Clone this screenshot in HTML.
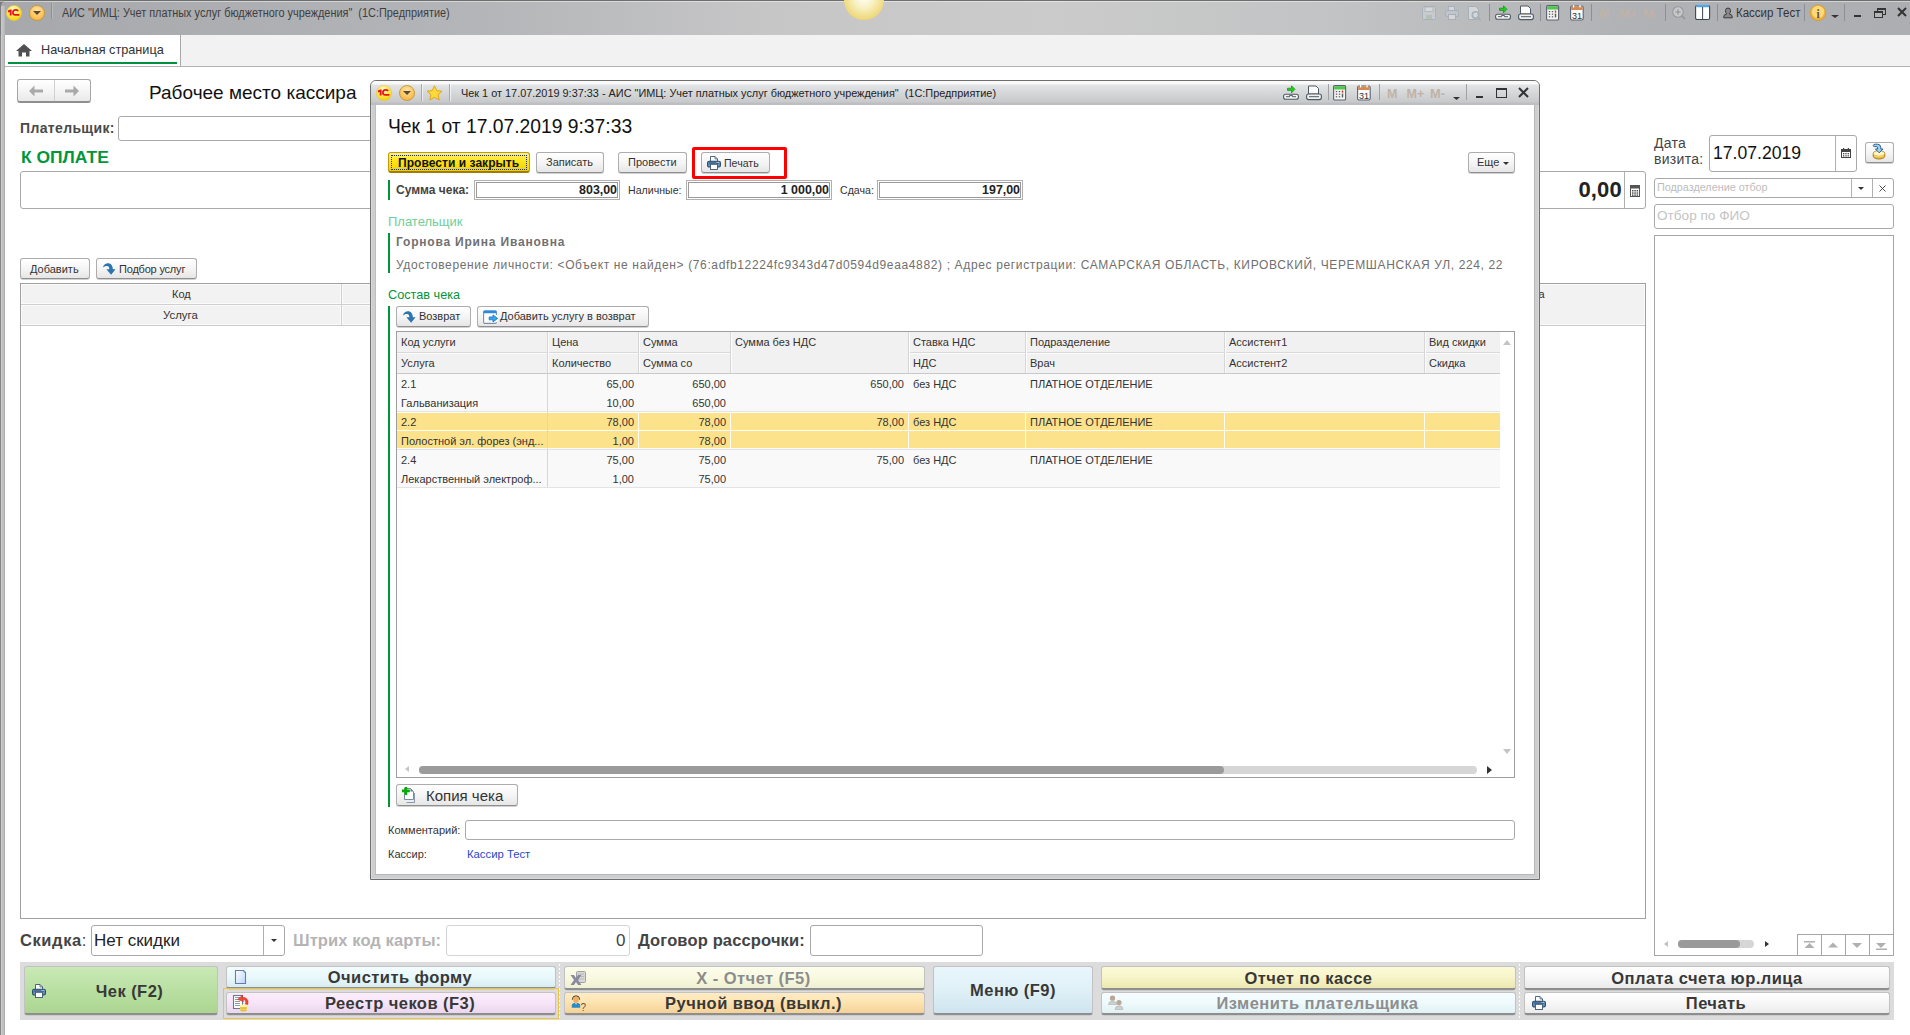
<!DOCTYPE html>
<html><head><meta charset="utf-8">
<style>
*{box-sizing:border-box}
html,body{margin:0;padding:0}
body{width:1910px;height:1035px;position:relative;overflow:hidden;background:#fff;font-family:"Liberation Sans",sans-serif;color:#333}
.a{position:absolute}
.t{position:absolute;white-space:nowrap;line-height:1}
.btn{position:absolute;border:1px solid #adadad;border-bottom-color:#8f8f8f;border-radius:3px;background:linear-gradient(#ffffff,#f4f4f4 55%,#e6e6e6);box-shadow:0 1px 0 rgba(0,0,0,0.18)}
.inp{position:absolute;border:1px solid #a9a9a9;border-radius:3px;background:#fff}
.sep{position:absolute;width:1px;background:#9a9a9a;box-shadow:1px 0 0 rgba(255,255,255,.6)}
.circ{position:absolute;border-radius:50%}
.hdr{position:absolute;background:#f0f0f0;border-right:1px solid #d6d6d6;border-bottom:1px solid #d6d6d6}
</style></head>
<body>

<!-- ============ MAIN TITLE BAR ============ -->
<div class="a" style="left:0;top:0;width:8px;height:8px;background:#7a7a7a"></div>
<div class="a" style="left:0;top:0;width:1910px;height:35px;background:linear-gradient(90deg,#a7a8ab 0%,#b4b5b8 25%,#c6c6c7 40%,#cbcbcb 55%,#c2c3c4 70%,#b1b2b5 85%,#adaeb1 100%);border-top:1px solid #6e6e6e;border-left:1px solid #7d7d7d;border-top-left-radius:6px"></div>
<div class="a" style="left:0;top:1px;width:1910px;height:1px;background:rgba(255,255,255,.45)"></div>

<div class="a" style="left:1px;top:6px;width:4px;height:29px;background:linear-gradient(90deg,#c9c9ca 0,#bcbdbf 3px,#b0b1b4 4px)"></div>
<!-- glow -->
<div class="circ" style="left:844px;top:-20px;width:40px;height:40px;background:radial-gradient(circle at 50% 45%,#fffef6 0%,#f7f0c0 35%,#efd97c 70%,#e7c558 100%)"></div>


<!-- logo + dropdown -->
<svg class="a" style="left:6px;top:5px" width="16" height="16" viewBox="0 0 16 16"><defs><radialGradient id="lg1" cx="0.45" cy="0.3" r="0.7"><stop offset="0" stop-color="#fffbd8"/><stop offset="0.55" stop-color="#ffea50"/><stop offset="1" stop-color="#f5d000"/></radialGradient></defs>
<circle cx="8" cy="8" r="7.6" fill="url(#lg1)" stroke="#e6c84a" stroke-width="0.6"/>
<path d="M1.9 5.6 L4.2 4.6 H5.6 V10.6 H3.7 V6.9 L1.9 7.5 Z" fill="#e8141c"/>
<path d="M12.2 5.9 Q11.2 4.9 9.6 4.9 Q6.9 4.9 6.9 7.7 Q6.9 9.9 9.2 9.9 H13.4" fill="none" stroke="#e8141c" stroke-width="1.7"/></svg>
<div class="circ" style="left:29px;top:5px;width:16px;height:16px;background:radial-gradient(circle at 50% 30%,#ffe3a6 0%,#ffc35a 60%,#f2a93a 100%);border:1px solid #c89c3c"></div>
<div class="a" style="left:33px;top:11px;width:0;height:0;border-left:4px solid transparent;border-right:4px solid transparent;border-top:4px solid #5a4a30"></div>
<div class="a" style="left:51px;top:3px;width:1px;height:16px;background:#8e8f92"></div><div class="a" style="left:52px;top:3px;width:1px;height:16px;background:rgba(255,255,255,.2)"></div>
<div class="t" style="left:62px;top:7px;font-size:12px;color:#3e3e3e;transform:scaleX(0.908);transform-origin:0 0">АИС "ИМЦ: Учет платных услуг бюджетного учреждения"&nbsp; (1С:Предприятие)</div>


<!-- right toolbar icons in main title -->
<svg class="a" style="left:1418px;top:4px" width="500" height="18" viewBox="0 0 500 18">
 <defs>
  <g id="icLoad">
   <path d="M4.5 3.2 H8.5 V0.8 L12 4.3 L8.5 7.8 V5.4 H4.5 Z" fill="#22d022" stroke="#0e8a0e" stroke-width="0.7"/>
   <rect x="0.6" y="9.2" width="14.8" height="5" rx="2" fill="#f2f2f2" stroke="#505a64" stroke-width="1.1"/>
   <path d="M3 11.7 H6.5 V10.6 H9.5 V11.7 H13" fill="none" stroke="#505a64" stroke-width="1"/>
  </g>
  <g id="icScan">
   <path d="M2.5 1 H10 L12.5 3.5 V9 H2.5 Z" fill="#fafafa" stroke="#505a64" stroke-width="1"/>
   <rect x="0.6" y="9" width="14.8" height="5.6" rx="2" fill="#f0f0f0" stroke="#505a64" stroke-width="1.1"/>
   <path d="M3 11.7 H13" fill="none" stroke="#505a64" stroke-width="1"/>
  </g>
  <g id="icCalc">
   <rect x="0.6" y="0.6" width="12" height="14.4" rx="1" fill="#f4f4f4" stroke="#5a6470" stroke-width="1.1"/>
   <rect x="1.2" y="1.2" width="10.8" height="3.3" fill="#4cc84c"/>
   <g fill="#5a5a5a"><rect x="2.8" y="6" width="1.4" height="1.2"/><rect x="5.8" y="6" width="1.4" height="1.2"/><rect x="2.8" y="8.6" width="1.4" height="1.2"/><rect x="5.8" y="8.6" width="1.4" height="1.2"/><rect x="2.8" y="11.2" width="1.4" height="1.2"/><rect x="5.8" y="11.2" width="1.4" height="1.2"/><rect x="8.8" y="8.6" width="1.4" height="3.8"/></g>
   <rect x="8.8" y="5.6" width="1.4" height="2" fill="#e02020"/>
  </g>
  <g id="icCal">
   <rect x="0.6" y="1" width="12.6" height="14" rx="1.5" fill="#fbfbfb" stroke="#5a6470" stroke-width="1.1"/>
   <rect x="1.2" y="1.5" width="11.4" height="3.5" fill="#d48a50"/>
   <rect x="3" y="0" width="1.2" height="2.5" fill="#fff"/><rect x="9.4" y="0" width="1.2" height="2.5" fill="#fff"/>
   <text x="6.9" y="13.6" font-size="9" text-anchor="middle" fill="#333" font-family="Liberation Sans">31</text>
  </g>
  <g id="icPrn">
   <path d="M3.5 0.5 H8 L10.5 3 V6 H3.5 Z" fill="#fff" stroke="#3a5878" stroke-width="0.9"/>
   <path d="M8 0.5 V3 H10.5" fill="none" stroke="#3a5878" stroke-width="0.7"/>
   <rect x="0.6" y="5.2" width="12.8" height="5.8" rx="1.6" fill="#6f93b8" stroke="#23476d" stroke-width="1.1"/>
   <rect x="2" y="6.6" width="10" height="0.9" fill="#23476d"/>
   <rect x="9.6" y="5.9" width="1" height="0.8" fill="#fff"/><rect x="11.2" y="5.9" width="1" height="0.8" fill="#fff"/>
   <rect x="3.5" y="8.3" width="7" height="5.2" fill="#fff" stroke="#3a5878" stroke-width="0.9"/>
  </g>
 </defs>
 <!-- save (disabled) -->
 <g transform="translate(4,2)" opacity="0.4">
  <rect x="0.5" y="0.5" width="13" height="13" rx="1" fill="#d8e0e8" stroke="#8aa0b4"/>
  <rect x="3" y="1" width="8" height="4.5" fill="#fff" stroke="#8aa0b4" stroke-width="0.8"/>
  <rect x="4" y="9" width="6" height="4" fill="#a8c8a8"/>
 </g>
 <!-- print disabled -->
 <g transform="translate(27,2)" opacity="0.4">
  <rect x="3.5" y="0.5" width="6" height="4" fill="#fff" stroke="#8aa0b4"/>
  <rect x="0.5" y="4.5" width="13" height="6" rx="1.5" fill="#c8d4e0" stroke="#8aa0b4"/>
  <rect x="3.5" y="8.5" width="7" height="5" fill="#fff" stroke="#8aa0b4"/>
 </g>
 <!-- preview disabled -->
 <g transform="translate(50,2)" opacity="0.4">
  <path d="M0.5 0.5 H7.5 L10.5 3.5 V13.5 H0.5 Z" fill="#fff" stroke="#8aa0b4"/>
  <circle cx="7.5" cy="9" r="3.2" fill="none" stroke="#8aa0b4" stroke-width="1.6"/>
  <line x1="9.8" y1="11.3" x2="12.8" y2="14.3" stroke="#8aa0b4" stroke-width="1.8"/>
 </g>
 <rect x="71" y="0" width="1" height="17" fill="#8e8f92"/>
 <use href="#icLoad" x="77" y="1"/>
 <use href="#icScan" x="100" y="1"/>
 <rect x="122" y="0" width="1" height="17" fill="#8e8f92"/>
 <use href="#icCalc" x="128" y="1"/>
 <use href="#icCal" x="152" y="1"/>
 <rect x="173" y="0" width="1" height="17" fill="#8e8f92"/>
 <g font-family="Liberation Sans" font-size="12.5" font-weight="bold" fill="#bfb3a8">
  <text x="181" y="13.8">M</text><text x="201.5" y="13.8">M+</text><text x="225" y="13.8" textLength="15" lengthAdjust="spacingAndGlyphs">M-</text>
 </g>
 <rect x="247" y="0" width="1" height="17" fill="#8e8f92"/>
 <g transform="translate(254,2)" opacity="0.45">
  <circle cx="6" cy="6" r="5.3" fill="#e8e8e8" stroke="#7a7a7a" stroke-width="1.1"/>
  <path d="M3.3 6 H8.7 M6 3.3 V8.7" stroke="#6a6a6a" stroke-width="1.1"/>
  <line x1="9.8" y1="9.8" x2="13" y2="13" stroke="#7a7a7a" stroke-width="1.8"/>
 </g>
 <g transform="translate(277,0.5)">
  <rect x="0.6" y="1" width="14" height="14" rx="1.5" fill="#fff" stroke="#3a4654" stroke-width="1.1"/>
  <rect x="1.1" y="0.6" width="13" height="2.2" rx="1" fill="#4aa8f0"/>
  <rect x="7.1" y="2.5" width="1" height="12" fill="#3a4654"/>
 </g>
 <rect x="299" y="0" width="1" height="17" fill="#8e8f92"/>
 <g transform="translate(305.5,3.5)">
  <path d="M4.5 0.5 Q7 0.5 7 3.3 Q7 5.4 5.7 6.3 Q8.8 6.9 8.8 9.6 V10.3 H0.2 V9.6 Q0.2 6.9 3.3 6.3 Q2 5.4 2 3.3 Q2 0.5 4.5 0.5 Z" fill="#8a8a8a" stroke="#3a3a3a" stroke-width="1"/>
 </g>
 <rect x="386" y="0" width="1" height="17" fill="#8e8f92"/>
 <circle cx="400" cy="8.8" r="7.8" fill="#f0b040" stroke="#d09a30" stroke-width="0.8"/>
 <circle cx="400" cy="8" r="6.2" fill="#ffd878"/>
 <text x="400" y="13.6" font-size="11.5" font-weight="bold" text-anchor="middle" fill="#5a5046" font-family="Liberation Serif">i</text>
 <path d="M413 11 h8 l-4 3 z" fill="#333"/>
 <rect x="426" y="0" width="1" height="17" fill="#8e8f92"/>
 <rect x="436" y="11" width="7" height="2" fill="#333"/>
 <rect x="459.5" y="4.5" width="8" height="6" fill="none" stroke="#333" stroke-width="1"/>
 <rect x="459" y="4" width="9" height="2" fill="#333"/>
 <rect x="456.5" y="7.5" width="8" height="6" fill="#b5b6b9" stroke="#333" stroke-width="1"/>
 <rect x="456" y="7" width="9" height="2" fill="#333"/>
 <path d="M480 4 L488 12 M488 4 L480 12" stroke="#333" stroke-width="2"/>
</svg>
<div class="t" style="left:1736px;top:7px;font-size:12.5px;color:#333;transform:scaleX(0.92);transform-origin:0 0">Кассир Тест</div>

<!-- ============ LEFT WINDOW FRAME ============ -->
<div class="a" style="left:0;top:35px;width:5px;height:1000px;background:linear-gradient(90deg,#858585 0,#858585 1px,#cdcdcd 1px,#cdcdcd 2px,#bfbfbf 2px,#bfbfbf 4px,#acacac 4px)"></div>

<!-- ============ TAB BAR ============ -->
<div class="a" style="left:5px;top:35px;width:1905px;height:32px;background:#f2f2f2;border-bottom:1px solid #b3b3b3"></div>
<div class="a" style="left:5px;top:35px;width:176px;height:31px;background:#fff;border-right:1px solid #a8a8a8"></div>
<div class="a" style="left:8px;top:62px;width:169px;height:2px;background:#00923f"></div>
<svg class="a" style="left:16px;top:44px" width="16" height="13" viewBox="0 0 16 13"><path d="M8 0 L16 7 H13.5 V12.5 H10 V8.5 H6 V12.5 H2.5 V7 H0 Z" fill="#505050"/></svg>
<div class="t" style="left:41px;top:44px;font-size:12.7px;color:#333">Начальная страница</div>


<!-- ============ MAIN FORM ============ -->
<!-- nav -->
<div class="btn" style="left:17px;top:79px;width:74px;height:24px;border-radius:3px;box-shadow:none;border-color:#a6a6a6;border-bottom-color:#8f8f8f;border-bottom-width:2px;background:linear-gradient(#fff,#f3f3f3 60%,#e9e9e9)"></div>
<div class="a" style="left:54px;top:80px;width:1px;height:21px;background:#d0d0d0"></div>
<svg class="a" style="left:29px;top:85px" width="60" height="12" viewBox="0 0 60 12">
 <path d="M0 6 L5.5 0.5 V4.5 H14 V7.5 H5.5 V11.5 Z" fill="#a9a9a9"/>
 <path d="M50 6 L44.5 0.5 V4.5 H36 V7.5 H44.5 V11.5 Z" fill="#a9a9a9"/>
</svg>
<div class="t" style="left:149px;top:83px;font-size:19px;color:#111">Рабочее место кассира</div>

<div class="t" style="left:20px;top:121px;font-size:14px;font-weight:bold;color:#4a4a4a;letter-spacing:0.35px">Плательщик:</div>
<div class="inp" style="left:118px;top:116px;width:1300px;height:25px"></div>

<div class="t" style="left:21px;top:150px;font-size:16px;font-weight:bold;color:#00963c;transform:scaleX(1.09);transform-origin:0 0">К ОПЛАТЕ</div>
<div class="inp" style="left:20px;top:171px;width:1626px;height:38px"></div>
<div class="a" style="left:1624px;top:172px;width:1px;height:36px;background:#b0b0b0"></div>
<div class="t" style="left:1500px;top:179px;width:122px;text-align:right;font-size:22px;font-weight:bold;color:#222;letter-spacing:0.2px">0,00</div>
<svg class="a" style="left:1630px;top:185px" width="10" height="12" viewBox="0 0 10 12">
 <rect x="0.5" y="0.5" width="9" height="11" fill="#fff" stroke="#555"/>
 <rect x="1" y="1" width="8" height="2.5" fill="#555"/>
 <g fill="#555"><rect x="2" y="5" width="1.5" height="1.5"/><rect x="4.3" y="5" width="1.5" height="1.5"/><rect x="6.6" y="5" width="1.5" height="1.5"/><rect x="2" y="7.3" width="1.5" height="1.5"/><rect x="4.3" y="7.3" width="1.5" height="1.5"/><rect x="6.6" y="7.3" width="1.5" height="1.5"/><rect x="2" y="9.4" width="1.5" height="1.5"/><rect x="4.3" y="9.4" width="1.5" height="1.5"/><rect x="6.6" y="9.4" width="1.5" height="1.5"/></g>
</svg>

<div class="btn" style="left:20px;top:258px;width:70px;height:21px"></div>
<div class="t" style="left:30px;top:264px;font-size:11px;color:#333">Добавить</div>
<div class="btn" style="left:96px;top:258px;width:101px;height:21px"></div>
<svg class="a" style="left:102px;top:262px" width="14" height="14" viewBox="0 0 14 14"><path d="M0.8 5.6 C2 2 5 0.8 7.5 1.6 C9.8 2.4 10.8 4.6 10.8 7.3 L13.6 7.3 L9.1 12.8 L4.4 7.3 L7.4 7.3 C7.4 5.4 6.6 4.3 5.2 4.1 C3.6 3.9 2.2 4.6 0.8 5.6 Z" fill="#2a74b0"/></svg>
<div class="t" style="left:119px;top:264px;font-size:11px;color:#333;letter-spacing:-0.2px">Подбор услуг</div>

<!-- main table -->
<div class="a" style="left:20px;top:283px;width:1626px;height:636px;border:1px solid #a0a0a0;background:#fff"></div>
<div class="a" style="left:21px;top:284px;width:1624px;height:41px;background:#f2f2f2;border:1px solid #fbfbfb"></div>
<div class="a" style="left:21px;top:303px;width:1349px;height:3px;background:#fbfbfb"></div>
<div class="a" style="left:340px;top:284px;width:3px;height:41px;background:#fbfbfb"></div>
<div class="a" style="left:21px;top:304px;width:1349px;height:1px;background:#cfcfcf"></div>
<div class="a" style="left:341px;top:284px;width:1px;height:41px;background:#cfcfcf"></div>
<div class="a" style="left:21px;top:325px;width:1624px;height:1px;background:#c9c9c9"></div>
<div class="t" style="left:172px;top:289px;font-size:11px;color:#333">Код</div>
<div class="t" style="left:163px;top:310px;font-size:11.4px;color:#333">Услуга</div>
<div class="t" style="left:1510px;top:289px;font-size:11px;color:#333">Сумма</div>


<!-- ============ RIGHT PANEL ============ -->
<div class="t" style="left:1654px;top:135px;font-size:14px;color:#444;line-height:16px;letter-spacing:0.3px">Дата<br>визита:</div>
<div class="inp" style="left:1709px;top:135px;width:148px;height:37px"></div>
<div class="a" style="left:1835px;top:136px;width:1px;height:35px;background:#b0b0b0"></div>
<div class="t" style="left:1713px;top:145px;font-size:17.6px;color:#111">17.07.2019</div>
<svg class="a" style="left:1841px;top:148px" width="10" height="10" viewBox="0 0 10 10">
 <rect x="0.5" y="1.5" width="9" height="8" fill="#fff" stroke="#444"/>
 <rect x="0.5" y="1.5" width="9" height="2.5" fill="#444"/>
 <rect x="2" y="0" width="1.2" height="2" fill="#444"/><rect x="6.8" y="0" width="1.2" height="2" fill="#444"/>
 <g fill="#444"><rect x="2" y="5" width="1.3" height="1.3"/><rect x="4.3" y="5" width="1.3" height="1.3"/><rect x="6.6" y="5" width="1.3" height="1.3"/><rect x="2" y="7.2" width="1.3" height="1.3"/><rect x="4.3" y="7.2" width="1.3" height="1.3"/><rect x="6.6" y="7.2" width="1.3" height="1.3"/></g>
</svg>
<div class="btn" style="left:1865px;top:142px;width:29px;height:21px"></div>
<svg class="a" style="left:1872px;top:143px" width="14" height="17" viewBox="0 0 14 17">
 <path d="M1.2 13.2 V10.4 A5.8 2.6 0 0 1 12.8 10.4 V13.2 A5.8 2.8 0 0 1 1.2 13.2 Z" fill="#e6b83a" stroke="#a8761c" stroke-width="0.9"/>
 <ellipse cx="7" cy="10.4" rx="5.4" ry="2.4" fill="#fff6c0"/>
 <path d="M2 13 Q7 14.8 12 13" fill="none" stroke="#f8e088" stroke-width="0.8"/>
 <path d="M1.2 2.6 Q1.6 1.2 3.2 1.2 H5.6 Q8.6 1.2 8.8 4.6 V6 H11 L7.2 9.8 L3.4 6 H5.6 V4.8 Q5.6 3.6 4.2 3.6 H2.6 Q1.2 3.6 1.2 2.6 Z" fill="#9cd2f6" stroke="#23507e" stroke-width="0.9"/>
</svg>
<div class="inp" style="left:1654px;top:178px;width:240px;height:20px"></div>
<div class="a" style="left:1851px;top:179px;width:1px;height:18px;background:#b0b0b0"></div>
<div class="a" style="left:1872px;top:179px;width:1px;height:18px;background:#b0b0b0"></div>
<div class="a" style="left:1858px;top:187px;width:0;height:0;border-left:3.5px solid transparent;border-right:3.5px solid transparent;border-top:3.5px solid #333"></div>
<svg class="a" style="left:1879px;top:185px" width="7" height="7" viewBox="0 0 7 7"><path d="M0.5 0.5 L6.5 6.5 M6.5 0.5 L0.5 6.5" stroke="#444" stroke-width="0.95"/></svg>
<div class="t" style="left:1657px;top:182px;font-size:10.8px;color:#bdbdbd">Подразделение отбор</div>
<div class="inp" style="left:1654px;top:204px;width:240px;height:25px"></div>
<div class="t" style="left:1657px;top:209px;font-size:13.6px;color:#c4c4c4">Отбор по ФИО</div>
<div class="a" style="left:1654px;top:235px;width:240px;height:721px;border:1px solid #a6a6a6;background:#fff"></div>
<!-- list scroll bottom -->
<div class="a" style="left:1664px;top:941px;width:0;height:0;border-top:3px solid transparent;border-bottom:3px solid transparent;border-right:4px solid #c0c0c0"></div>
<div class="a" style="left:1678px;top:940px;width:76px;height:8px;border-radius:4px;background:#d6d6d6"></div>
<div class="a" style="left:1678px;top:940px;width:62px;height:8px;border-radius:4px;background:#9a9a9a"></div>
<div class="a" style="left:1765px;top:941px;width:0;height:0;border-top:3.5px solid transparent;border-bottom:3.5px solid transparent;border-left:4.5px solid #333"></div>
<div class="a" style="left:1797px;top:934px;width:97px;height:22px;border:1px solid #a6a6a6;border-right:none;border-bottom:none"></div>
<div class="a" style="left:1821px;top:934px;width:1px;height:21px;background:#a6a6a6"></div>
<div class="a" style="left:1845px;top:934px;width:1px;height:21px;background:#a6a6a6"></div>
<div class="a" style="left:1869px;top:934px;width:1px;height:21px;background:#a6a6a6"></div>
<svg class="a" style="left:1797px;top:934px" width="97" height="22" viewBox="0 0 97 22">
 <rect x="7" y="7" width="11" height="1.5" fill="#b0b0b0"/><path d="M7.5 14 L12.5 9 L17.5 14 Z" fill="#b0b0b0"/>
 <path d="M31 13.5 L36 8.5 L41 13.5 Z" fill="#b0b0b0"/>
 <path d="M55 9 L60 14 L65 9 Z" fill="#b0b0b0"/>
 <path d="M79 9 L84 14 L89 9 Z" fill="#b0b0b0"/><rect x="79" y="14.5" width="11" height="1.5" fill="#b0b0b0"/>
</svg>

<!-- ============ BOTTOM ROW ============ -->
<div class="t" style="left:20px;top:932px;font-size:16.5px;font-weight:bold;color:#444;letter-spacing:0.6px">Скидка<span style="font-weight:normal">:</span></div>
<div class="inp" style="left:91px;top:925px;width:194px;height:31px"></div>
<div class="a" style="left:263px;top:926px;width:1px;height:29px;background:#b0b0b0"></div>
<div class="a" style="left:271px;top:939px;width:0;height:0;border-left:3px solid transparent;border-right:3px solid transparent;border-top:3px solid #333"></div>
<div class="t" style="left:94px;top:932px;font-size:17px;color:#222">Нет скидки</div>
<div class="t" style="left:293px;top:932px;font-size:16.5px;font-weight:bold;color:#b4b4b4;letter-spacing:0.1px">Штрих код карты:</div>
<div class="inp" style="left:446px;top:925px;width:184px;height:31px;border-color:#d4d4d4"></div>
<div class="t" style="left:616px;top:932px;font-size:17px;color:#444">0</div>
<div class="t" style="left:638px;top:932px;font-size:16.5px;font-weight:bold;color:#444;letter-spacing:0.15px">Договор рассрочки:</div>
<div class="inp" style="left:810px;top:925px;width:173px;height:31px"></div>


<!-- ============ BUTTON PANEL ============ -->
<style>
.bb{position:absolute;border-radius:3px;border:1px solid #c2c2c2;border-bottom:2px solid #8e8e8e;box-shadow:0 0.5px 0 rgba(0,0,0,.15)}
.bt{position:absolute;white-space:nowrap;line-height:1;font-size:16.5px;font-weight:bold;color:#383838;letter-spacing:0.45px;text-align:center}
</style>
<div class="a" style="left:20px;top:962px;width:1874px;height:58px;background:#dcdcdc"></div>
<div class="a" style="left:559px;top:964px;width:1px;height:54px;background:repeating-linear-gradient(#fff 0,#fff 2px,transparent 2px,transparent 4px)"></div>
<div class="a" style="left:1519px;top:964px;width:1px;height:54px;background:repeating-linear-gradient(#fff 0,#fff 2px,transparent 2px,transparent 4px)"></div>

<div class="bb" style="left:24px;top:966px;width:194px;height:49px;background:linear-gradient(#c9e9b6,#b9e0a2 50%,#acd592)"></div>
<svg class="a" style="left:32px;top:984px" width="14" height="14" viewBox="0 0 14 14"><use href="#icPrn"/></svg>
<div class="bt" style="left:24px;top:983px;width:211px">Чек (F2)</div>

<div class="bb" style="left:226px;top:966px;width:330px;height:23px;background:linear-gradient(#f2fdff,#e9f8fb 50%,#d8edf1)"></div>
<svg class="a" style="left:234px;top:969px" width="14" height="16" viewBox="0 0 14 16">
 <defs><linearGradient id="docg" x1="0" y1="0" x2="1" y2="1"><stop offset="0" stop-color="#ffffff"/><stop offset="1" stop-color="#bcd6f8"/></linearGradient></defs>
 <path d="M1.5 1.5 H9.5 L11.5 3.5 V14.5 H1.5 Z" fill="url(#docg)" stroke="#6a78b8" stroke-width="1.1"/>
 <path d="M9.5 1.5 L11.5 3.5 H9.5 Z" fill="#5aa0f0"/>
</svg>
<div class="bt" style="left:226px;top:969px;width:348px">Очистить форму</div>

<div class="a" style="left:223px;top:988px;width:336px;height:31px;border:1px solid #f2c23c"></div>
<div class="bb" style="left:226px;top:992px;width:330px;height:23px;background:linear-gradient(#fbeefc,#f6e4f8 50%,#ead7ed)"></div>
<svg class="a" style="left:232px;top:994px" width="18" height="18" viewBox="0 0 18 18">
 <rect x="1.5" y="1.5" width="9" height="13" fill="#fff" stroke="#6a7a90" stroke-width="1.1"/>
 <g stroke="#8a9ab0" stroke-width="1"><line x1="3" y1="3.5" x2="8" y2="3.5"/><line x1="3" y1="5.5" x2="8" y2="5.5"/><line x1="3" y1="7.5" x2="8" y2="7.5"/><line x1="3" y1="9.5" x2="8" y2="9.5"/><line x1="3" y1="11.5" x2="8" y2="11.5"/></g>
 <ellipse cx="11.5" cy="15.8" rx="3.5" ry="1.6" fill="#e2c030"/>
 <rect x="8" y="11.8" width="7" height="4" fill="#f2d860"/>
 <ellipse cx="11.5" cy="11.8" rx="3.5" ry="1.6" fill="#fff4a8"/>
 <line x1="8.5" y1="14" x2="14.5" y2="14" stroke="#c8a020" stroke-width="0.8"/>
 <path d="M15.8 10.5 Q17 6.5 14.2 4.2 Q12.2 2.8 10.2 3.8 L10.6 1.2 L5.6 5.4 L11.4 7.6 L10.8 5.9 Q12.6 5.3 13.5 6.9 Q14.1 8.3 13.4 10 Z" fill="#f04a32" stroke="#c82a18" stroke-width="0.5"/>
</svg>
<div class="bt" style="left:226px;top:995px;width:348px">Реестр чеков (F3)</div>

<div class="bb" style="left:564px;top:966px;width:361px;height:24px;background:linear-gradient(#fdfdec,#f9f9e1 50%,#efefd2)"></div>
<svg class="a" style="left:570px;top:971px" width="17" height="15" viewBox="0 0 17 15">
 <rect x="6.5" y="0.5" width="9" height="11" rx="1" fill="#d8d8d8" stroke="#a0a0a0"/>
 <g stroke="#b8b8b8"><line x1="8" y1="3" x2="14" y2="3"/><line x1="8" y1="5.5" x2="14" y2="5.5"/><line x1="8" y1="8" x2="14" y2="8"/></g>
 <path d="M0.5 4 L4 4 L6 7 L8 4 L11.5 4 L8 9 L11.5 14 L8 14 L6 11 L4 14 L0.5 14 L4 9 Z" fill="#8a8aa0"/>
</svg>
<div class="bt" style="left:564px;top:970px;width:379px;color:#8c8c8c">X - Отчет (F5)</div>

<div class="bb" style="left:564px;top:992px;width:361px;height:23px;background:linear-gradient(#ffecc6,#fde2ae 50%,#f4d298)"></div>
<svg class="a" style="left:571px;top:995px" width="18" height="17" viewBox="0 0 18 17">
 <path d="M1.4 4.6 Q1.4 0.8 5 0.8 Q8.6 0.8 8.6 4.6" fill="none" stroke="#2a2a2a" stroke-width="1"/>
 <ellipse cx="5" cy="4.6" rx="2.9" ry="3.2" fill="#f0b060"/>
 <path d="M0.8 12.8 V10.4 Q0.8 7.8 5 7.8 Q9.2 7.8 9.2 10.4 V12.8 Z" fill="#2a8ac8"/>
 <path d="M4.3 7.9 L5 10 L5.7 7.9 Z" fill="#fff"/>
 <text x="9.6" y="15.6" font-size="10" font-family="Liberation Sans" fill="#7a4a2a">?</text>
</svg>
<div class="bt" style="left:564px;top:995px;width:379px">Ручной ввод (выкл.)</div>

<div class="bb" style="left:933px;top:966px;width:160px;height:49px;background:linear-gradient(#e9f7fc,#dff0f7 50%,#cfe4ee)"></div>
<div class="bt" style="left:933px;top:982px;width:160px">Меню (F9)</div>

<div class="bb" style="left:1101px;top:966px;width:415px;height:24px;background:linear-gradient(#fbfbd8,#f6f4c8 50%,#ece8b2)"></div>
<div class="bt" style="left:1101px;top:970px;width:415px">Отчет по кассе</div>

<div class="bb" style="left:1101px;top:992px;width:415px;height:23px;background:linear-gradient(#f6fdff,#eefafc 50%,#e1f1f3)"></div>
<svg class="a" style="left:1108px;top:995px" width="18" height="16" viewBox="0 0 18 16">
 <circle cx="4.5" cy="3.2" r="2.6" fill="#b8a898"/><path d="M0.5 9.5 Q0.5 6.3 4.5 6.3 Q8.5 6.3 8.5 9.5 Z" fill="#d0d0d0" stroke="#b0b0b0" stroke-width="0.6"/>
 <circle cx="11" cy="7.6" r="2.6" fill="#b8a898"/><path d="M7 14.5 Q7 10.8 11 10.8 Q15 10.8 15 14.5 Z" fill="#d0d0d0" stroke="#b0b0b0" stroke-width="0.6"/>
</svg>
<div class="bt" style="left:1101px;top:995px;width:433px;color:#8e8e8e">Изменить плательщика</div>

<div class="bb" style="left:1524px;top:966px;width:366px;height:24px;background:linear-gradient(#ffffff,#f7f7f7 50%,#ebebeb)"></div>
<div class="bt" style="left:1524px;top:970px;width:366px">Оплата счета юр.лица</div>

<div class="bb" style="left:1524px;top:992px;width:366px;height:23px;background:linear-gradient(#ffffff,#f7f7f7 50%,#ebebeb)"></div>
<svg class="a" style="left:1532px;top:996px" width="14" height="14" viewBox="0 0 14 14"><use href="#icPrn"/></svg>
<div class="bt" style="left:1524px;top:995px;width:384px">Печать</div>


<!-- ============ MODAL ============ -->
<div class="a" style="left:370px;top:80px;width:1170px;height:800px;border:1px solid #6f6f6f;border-radius:6px 6px 0 0;background:#cdced0"></div>
<div class="a" style="left:371px;top:81px;width:1168px;height:24px;border-radius:5px 5px 0 0;background:linear-gradient(#fbfbfb 0,#f8f8f8 3px,#e3e4e5 4px,#d6d7d8 50%,#c8c9cb 88%,#bdbec1 92%,#bdbec1 100%)"></div>
<div class="a" style="left:376px;top:105px;width:1158px;height:769px;background:#fff"></div>
<div class="a" style="left:371px;top:105px;width:1px;height:774px;background:#d9dadc"></div>
<div class="a" style="left:375px;top:105px;width:1px;height:770px;background:#bdbec0"></div>
<div class="a" style="left:1534px;top:105px;width:1px;height:770px;background:#b6b7b9"></div>
<div class="a" style="left:1538px;top:105px;width:1px;height:774px;background:#d9dadb"></div>
<div class="a" style="left:375px;top:874px;width:1160px;height:1px;background:#b6b7b9"></div>
<div class="a" style="left:371px;top:878px;width:1168px;height:1px;background:#d9dadb"></div>

<!-- modal title bar -->
<svg class="a" style="left:376px;top:85px" width="16" height="16" viewBox="0 0 16 16">
<circle cx="8" cy="8" r="7.6" fill="url(#lg1)" stroke="#e6c84a" stroke-width="0.6"/>
<path d="M1.9 5.6 L4.2 4.6 H5.6 V10.6 H3.7 V6.9 L1.9 7.5 Z" fill="#e8141c"/>
<path d="M12.2 5.9 Q11.2 4.9 9.6 4.9 Q6.9 4.9 6.9 7.7 Q6.9 9.9 9.2 9.9 H13.4" fill="none" stroke="#e8141c" stroke-width="1.7"/></svg>
<div class="circ" style="left:399px;top:85px;width:16px;height:16px;background:radial-gradient(circle at 50% 30%,#ffe3a6 0%,#ffc35a 60%,#f2a93a 100%);border:1px solid #c89c3c"></div>
<div class="a" style="left:403px;top:91px;width:0;height:0;border-left:4px solid transparent;border-right:4px solid transparent;border-top:4px solid #5a4a30"></div>
<div class="sep" style="left:421px;top:84px;height:17px;background:#a8a9ab"></div>
<svg class="a" style="left:426px;top:85px" width="17" height="16" viewBox="0 0 17 16"><path d="M8.5 0.8 L10.8 5.6 L16 6.2 L12.1 9.7 L13.2 15 L8.5 12.3 L3.8 15 L4.9 9.7 L1 6.2 L6.2 5.6 Z" fill="#ffd83a" stroke="#e0a010" stroke-width="0.9"/></svg>
<div class="sep" style="left:449px;top:84px;height:17px;background:#a8a9ab"></div>
<div class="t" style="left:461px;top:88px;font-size:11px;color:#222;transform:scaleX(0.99);transform-origin:0 0">Чек 1 от 17.07.2019 9:37:33 - АИС "ИМЦ: Учет платных услуг бюджетного учреждения"&nbsp; (1С:Предприятие)</div>

<svg class="a" style="left:1280px;top:84px" width="260" height="18" viewBox="0 0 260 18">
 <use href="#icLoad" x="3" y="1"/>
 <use href="#icScan" x="26" y="1"/>
 <rect x="48" y="0" width="1" height="16" fill="#a0a1a3"/>
 <use href="#icCalc" x="53" y="1"/>
 <use href="#icCal" x="77" y="1"/>
 <rect x="99" y="0" width="1" height="16" fill="#a0a1a3"/>
 <g font-family="Liberation Sans" font-size="12.5" font-weight="bold" fill="#bfb3a8">
  <text x="107" y="13.8">M</text><text x="126.5" y="13.8">M+</text><text x="150" y="13.8" textLength="15" lengthAdjust="spacingAndGlyphs">M-</text>
 </g>
 <path d="M173 13 h7 l-3.5 3 z" fill="#333"/>
 <rect x="186" y="0" width="1" height="16" fill="#a0a1a3"/>
 <rect x="196" y="12" width="7" height="2" fill="#333"/>
 <rect x="216.5" y="4.5" width="10" height="9" fill="none" stroke="#333" stroke-width="1"/>
 <rect x="216" y="4" width="11" height="2" fill="#333"/>
 <path d="M239 4 L248 13 M248 4 L239 13" stroke="#333" stroke-width="2"/>
</svg>


<!-- modal content -->
<div class="t" style="left:388px;top:117px;font-size:19.3px;color:#111">Чек 1 от 17.07.2019 9:37:33</div>

<div class="a" style="left:388px;top:152px;width:142px;height:21px;border:1px solid #c09a10;border-bottom:2px solid #9a7c10;border-radius:3px;background:linear-gradient(#fff27a,#ffe41a 45%,#f2d000)"></div>
<div class="a" style="left:391px;top:155px;width:136px;height:15px;border:1px dotted #1a2a8a"></div>
<div class="t" style="left:398px;top:157px;font-size:12px;font-weight:bold;color:#111;letter-spacing:0.05px">Провести и закрыть</div>

<div class="btn" style="left:536px;top:152px;width:68px;height:21px"></div>
<div class="t" style="left:546px;top:157px;font-size:11px;color:#333">Записать</div>
<div class="btn" style="left:618px;top:152px;width:69px;height:21px"></div>
<div class="t" style="left:628px;top:157px;font-size:11px;color:#333">Провести</div>
<div class="btn" style="left:701px;top:152px;width:69px;height:21px"></div>
<svg class="a" style="left:707px;top:156px" width="14" height="14" viewBox="0 0 14 14"><use href="#icPrn"/></svg>
<div class="t" style="left:724px;top:158px;font-size:10.6px;color:#333">Печать</div>
<div class="a" style="left:692px;top:147px;width:95px;height:32px;border:3px solid #ff0000;border-radius:2px"></div>

<div class="btn" style="left:1468px;top:152px;width:47px;height:21px"></div>
<div class="t" style="left:1477px;top:157px;font-size:11px;color:#333">Еще</div>
<div class="a" style="left:1503px;top:162px;width:0;height:0;border-left:3px solid transparent;border-right:3px solid transparent;border-top:3px solid #333"></div>

<div class="a" style="left:388px;top:180px;width:2px;height:20px;background:#00963c"></div>
<div class="t" style="left:396px;top:184px;font-size:12px;font-weight:bold;color:#444">Сумма чека:</div>
<div class="a" style="left:474px;top:180px;width:146px;height:20px;border:1px solid #b0b0b0;background:#fff"></div>
<div class="a" style="left:476px;top:182px;width:142px;height:16px;border:1px solid #9a9a9a"></div>
<div class="t" style="left:478px;top:184px;width:139px;text-align:right;font-size:12.4px;font-weight:bold;color:#222">803,00</div>
<div class="t" style="left:628px;top:185px;font-size:10.6px;color:#333">Наличные:</div>
<div class="a" style="left:686px;top:180px;width:146px;height:20px;border:1px solid #b0b0b0;background:#fff"></div>
<div class="a" style="left:688px;top:182px;width:142px;height:16px;border:1px solid #9a9a9a"></div>
<div class="t" style="left:690px;top:184px;width:139px;text-align:right;font-size:12.4px;font-weight:bold;color:#222">1 000,00</div>
<div class="t" style="left:840px;top:185px;font-size:10.6px;color:#333">Сдача:</div>
<div class="a" style="left:877px;top:180px;width:146px;height:20px;border:1px solid #b0b0b0;background:#fff"></div>
<div class="a" style="left:879px;top:182px;width:142px;height:16px;border:1px solid #9a9a9a"></div>
<div class="t" style="left:881px;top:184px;width:139px;text-align:right;font-size:12.4px;font-weight:bold;color:#222">197,00</div>

<div class="t" style="left:388px;top:215px;font-size:13px;color:#6fcf97">Плательщик</div>
<div class="a" style="left:388px;top:233px;width:2px;height:40px;background:#00963c"></div>
<div class="t" style="left:396px;top:236px;font-size:12px;font-weight:bold;color:#707070;letter-spacing:0.8px">Горнова Ирина Ивановна</div>
<div class="t" style="left:396px;top:259px;font-size:12px;color:#707070;letter-spacing:0.64px">Удостоверение личности: &lt;Объект не найден&gt; (76:adfb12224fc9343d47d0594d9eaa4882) ; Адрес регистрации: САМАРСКАЯ ОБЛАСТЬ, КИРОВСКИЙ, ЧЕРЕМШАНСКАЯ УЛ, 224, 22</div>

<div class="t" style="left:388px;top:289px;font-size:12.7px;color:#00963c">Состав чека</div>
<div class="a" style="left:388px;top:306px;width:2px;height:501px;background:#00963c"></div>

<div class="btn" style="left:396px;top:306px;width:75px;height:21px"></div>
<svg class="a" style="left:402px;top:310px" width="14" height="14" viewBox="0 0 14 14"><path d="M0.8 5.6 C2 2 5 0.8 7.5 1.6 C9.8 2.4 10.8 4.6 10.8 7.3 L13.6 7.3 L9.1 12.8 L4.4 7.3 L7.4 7.3 C7.4 5.4 6.6 4.3 5.2 4.1 C3.6 3.9 2.2 4.6 0.8 5.6 Z" fill="#2a74b0"/></svg>
<div class="t" style="left:419px;top:311px;font-size:11px;color:#333">Возврат</div>
<div class="btn" style="left:477px;top:306px;width:172px;height:21px"></div>
<svg class="a" style="left:483px;top:310px" width="16" height="14" viewBox="0 0 16 14">
 <rect x="0.6" y="1" width="12.8" height="12.4" rx="1.4" fill="#fff" stroke="#7a90a8" stroke-width="1.1"/>
 <rect x="0.4" y="0.4" width="13.2" height="2.8" rx="1" fill="#2a8ae0"/>
 <rect x="12.6" y="5" width="2" height="7" fill="#fafafa"/>
 <path d="M6.2 7 H10 V4.9 L14.6 8.4 L10 11.9 V9.8 H6.2 Z" fill="#32aaf2" stroke="#1a6ab8" stroke-width="0.8"/>
</svg>
<div class="t" style="left:500px;top:311px;font-size:11px;color:#333">Добавить услугу в возврат</div>

<!-- modal table -->
<div class="a" style="left:396px;top:331px;width:1119px;height:447px;border:1px solid #9e9e9e;background:#fff"></div>
<div class="a" style="left:397px;top:332px;width:1103px;height:41px;background:#f1f1f1"></div>
<div class="a" style="left:397px;top:352px;width:150px;height:1px;background:#d9d9d9"></div>
<div class="a" style="left:397px;top:353px;width:150px;height:1px;background:#fcfcfc"></div>
<div class="a" style="left:548px;top:352px;width:90px;height:1px;background:#d9d9d9"></div>
<div class="a" style="left:548px;top:353px;width:90px;height:1px;background:#fcfcfc"></div>
<div class="a" style="left:639px;top:352px;width:91px;height:1px;background:#d9d9d9"></div>
<div class="a" style="left:639px;top:353px;width:91px;height:1px;background:#fcfcfc"></div>
<div class="a" style="left:909px;top:352px;width:116px;height:1px;background:#d9d9d9"></div>
<div class="a" style="left:909px;top:353px;width:116px;height:1px;background:#fcfcfc"></div>
<div class="a" style="left:1026px;top:352px;width:198px;height:1px;background:#d9d9d9"></div>
<div class="a" style="left:1026px;top:353px;width:198px;height:1px;background:#fcfcfc"></div>
<div class="a" style="left:1225px;top:352px;width:199px;height:1px;background:#d9d9d9"></div>
<div class="a" style="left:1225px;top:353px;width:199px;height:1px;background:#fcfcfc"></div>
<div class="a" style="left:1425px;top:352px;width:75px;height:1px;background:#d9d9d9"></div>
<div class="a" style="left:1425px;top:353px;width:75px;height:1px;background:#fcfcfc"></div>
<div class="a" style="left:547px;top:332px;width:1px;height:41px;background:#d6d6d6"></div>
<div class="a" style="left:548px;top:332px;width:1px;height:41px;background:#fcfcfc"></div>
<div class="a" style="left:638px;top:332px;width:1px;height:41px;background:#d6d6d6"></div>
<div class="a" style="left:639px;top:332px;width:1px;height:41px;background:#fcfcfc"></div>
<div class="a" style="left:730px;top:332px;width:1px;height:41px;background:#d6d6d6"></div>
<div class="a" style="left:731px;top:332px;width:1px;height:41px;background:#fcfcfc"></div>
<div class="a" style="left:908px;top:332px;width:1px;height:41px;background:#d6d6d6"></div>
<div class="a" style="left:909px;top:332px;width:1px;height:41px;background:#fcfcfc"></div>
<div class="a" style="left:1025px;top:332px;width:1px;height:41px;background:#d6d6d6"></div>
<div class="a" style="left:1026px;top:332px;width:1px;height:41px;background:#fcfcfc"></div>
<div class="a" style="left:1224px;top:332px;width:1px;height:41px;background:#d6d6d6"></div>
<div class="a" style="left:1225px;top:332px;width:1px;height:41px;background:#fcfcfc"></div>
<div class="a" style="left:1424px;top:332px;width:1px;height:41px;background:#d6d6d6"></div>
<div class="a" style="left:1425px;top:332px;width:1px;height:41px;background:#fcfcfc"></div>
<div class="a" style="left:397px;top:373px;width:1103px;height:1px;background:#c9c9c9"></div>
<div class="a" style="left:397px;top:374px;width:1103px;height:37px;background:#f9f9f9"></div>
<div class="a" style="left:397px;top:411px;width:1103px;height:1px;background:#e3e3e3"></div>
<div class="a" style="left:397px;top:412px;width:1103px;height:37px;background:#fde28c;border-top:1px solid #fff;border-bottom:1px solid #fafafa"></div>
<div class="a" style="left:397px;top:449px;width:1103px;height:1px;background:#e3e3e3"></div>
<div class="a" style="left:397px;top:450px;width:1103px;height:37px;background:#f9f9f9"></div>
<div class="a" style="left:397px;top:487px;width:1103px;height:1px;background:#e3e3e3"></div>
<div class="a" style="left:397px;top:430px;width:1103px;height:1px;background:#fffdf6"></div>
<div class="a" style="left:547px;top:412px;width:1px;height:37px;background:#fffdf6"></div>
<div class="a" style="left:638px;top:412px;width:1px;height:37px;background:#fffdf6"></div>
<div class="a" style="left:730px;top:412px;width:1px;height:37px;background:#fffdf6"></div>
<div class="a" style="left:908px;top:412px;width:1px;height:37px;background:#fffdf6"></div>
<div class="a" style="left:1025px;top:412px;width:1px;height:37px;background:#fffdf6"></div>
<div class="a" style="left:1224px;top:412px;width:1px;height:37px;background:#fffdf6"></div>
<div class="a" style="left:1424px;top:412px;width:1px;height:37px;background:#fffdf6"></div>
<div class="a" style="left:547px;top:374px;width:1px;height:37px;background:#d6d6d6"></div>
<div class="a" style="left:547px;top:450px;width:1px;height:37px;background:#d6d6d6"></div>
<div class="a" style="left:547px;top:412px;width:1px;height:37px;background:#d6d6d6"></div>
<div class="t" style="left:401px;top:337px;font-size:11px;color:#333">Код услуги</div>
<div class="t" style="left:552px;top:337px;font-size:11px;color:#333">Цена</div>
<div class="t" style="left:643px;top:337px;font-size:11px;color:#333">Сумма</div>
<div class="t" style="left:735px;top:337px;font-size:11px;color:#333">Сумма без НДС</div>
<div class="t" style="left:913px;top:337px;font-size:11px;color:#333">Ставка НДС</div>
<div class="t" style="left:1030px;top:337px;font-size:11px;color:#333">Подразделение</div>
<div class="t" style="left:1229px;top:337px;font-size:11px;color:#333">Ассистент1</div>
<div class="t" style="left:1429px;top:337px;font-size:11px;color:#333">Вид скидки</div>
<div class="t" style="left:401px;top:358px;font-size:11px;color:#333">Услуга</div>
<div class="t" style="left:552px;top:358px;font-size:11px;color:#333">Количество</div>
<div class="t" style="left:643px;top:358px;font-size:11px;color:#333">Сумма со</div>
<div class="t" style="left:913px;top:358px;font-size:11px;color:#333">НДС</div>
<div class="t" style="left:1030px;top:358px;font-size:11px;color:#333">Врач</div>
<div class="t" style="left:1229px;top:358px;font-size:11px;color:#333">Ассистент2</div>
<div class="t" style="left:1429px;top:358px;font-size:11px;color:#333">Скидка</div>
<div class="a" style="left:1503px;top:340px;width:0;height:0;border-left:4px solid transparent;border-right:4px solid transparent;border-bottom:5px solid #c4c4c4"></div>
<div class="t" style="left:401px;top:379px;font-size:11px;color:#333">2.1</div>
<div class="t" style="left:401px;top:398px;font-size:11px;color:#333">Гальванизация</div>
<div class="t" style="left:514px;top:379px;width:120px;text-align:right;font-size:11px;color:#333">65,00</div>
<div class="t" style="left:514px;top:398px;width:120px;text-align:right;font-size:11px;color:#333">10,00</div>
<div class="t" style="left:606px;top:379px;width:120px;text-align:right;font-size:11px;color:#333">650,00</div>
<div class="t" style="left:606px;top:398px;width:120px;text-align:right;font-size:11px;color:#333">650,00</div>
<div class="t" style="left:784px;top:379px;width:120px;text-align:right;font-size:11px;color:#333">650,00</div>
<div class="t" style="left:913px;top:379px;font-size:11px;color:#333">без НДС</div>
<div class="t" style="left:1030px;top:379px;font-size:11px;color:#333">ПЛАТНОЕ ОТДЕЛЕНИЕ</div>
<div class="t" style="left:401px;top:417px;font-size:11px;color:#333">2.2</div>
<div class="t" style="left:401px;top:436px;font-size:11px;color:#333">Полостной эл. форез (энд...</div>
<div class="t" style="left:514px;top:417px;width:120px;text-align:right;font-size:11px;color:#333">78,00</div>
<div class="t" style="left:514px;top:436px;width:120px;text-align:right;font-size:11px;color:#333">1,00</div>
<div class="t" style="left:606px;top:417px;width:120px;text-align:right;font-size:11px;color:#333">78,00</div>
<div class="t" style="left:606px;top:436px;width:120px;text-align:right;font-size:11px;color:#333">78,00</div>
<div class="t" style="left:784px;top:417px;width:120px;text-align:right;font-size:11px;color:#333">78,00</div>
<div class="t" style="left:913px;top:417px;font-size:11px;color:#333">без НДС</div>
<div class="t" style="left:1030px;top:417px;font-size:11px;color:#333">ПЛАТНОЕ ОТДЕЛЕНИЕ</div>
<div class="t" style="left:401px;top:455px;font-size:11px;color:#333">2.4</div>
<div class="t" style="left:401px;top:474px;font-size:11px;color:#333">Лекарственный электроф...</div>
<div class="t" style="left:514px;top:455px;width:120px;text-align:right;font-size:11px;color:#333">75,00</div>
<div class="t" style="left:514px;top:474px;width:120px;text-align:right;font-size:11px;color:#333">1,00</div>
<div class="t" style="left:606px;top:455px;width:120px;text-align:right;font-size:11px;color:#333">75,00</div>
<div class="t" style="left:606px;top:474px;width:120px;text-align:right;font-size:11px;color:#333">75,00</div>
<div class="t" style="left:784px;top:455px;width:120px;text-align:right;font-size:11px;color:#333">75,00</div>
<div class="t" style="left:913px;top:455px;font-size:11px;color:#333">без НДС</div>
<div class="t" style="left:1030px;top:455px;font-size:11px;color:#333">ПЛАТНОЕ ОТДЕЛЕНИЕ</div>
<div class="a" style="left:1503px;top:749px;width:0;height:0;border-left:4px solid transparent;border-right:4px solid transparent;border-top:5px solid #c4c4c4"></div>
<div class="a" style="left:405px;top:766px;width:0;height:0;border-top:3.5px solid transparent;border-bottom:3.5px solid transparent;border-right:4px solid #c4c4c4"></div>
<div class="a" style="left:419px;top:766px;width:1058px;height:8px;border-radius:4px;background:#d6d6d6"></div>
<div class="a" style="left:419px;top:766px;width:805px;height:8px;border-radius:4px;background:#9b9b9b"></div>
<div class="a" style="left:1487px;top:766px;width:0;height:0;border-top:4px solid transparent;border-bottom:4px solid transparent;border-left:5px solid #333"></div>
<div class="btn" style="left:396px;top:784px;width:122px;height:22px"></div>
<svg class="a" style="left:400px;top:786px" width="18" height="18" viewBox="0 0 18 18">
 <path d="M14.5 7 V16.5 H6.5" fill="none" stroke="#8a9ab0" stroke-width="1"/>
 <path d="M4.5 2.5 H10.5 L13.5 5.5 V13.5 H4.5 Z" fill="#fff" stroke="#7a8aa0" stroke-width="1"/>
 <path d="M10.5 2.5 V5.5 H13.5 Z" fill="#6a7a90"/>
 <path d="M1.9 4.9 H9.9 M5.9 0.9 V8.9" stroke="#00b000" stroke-width="2.6"/>
</svg>
<div class="t" style="left:426px;top:788px;font-size:15px;color:#333">Копия чека</div>
<div class="t" style="left:388px;top:825px;font-size:11px;color:#333">Комментарий:</div>
<div class="inp" style="left:465px;top:820px;width:1050px;height:20px"></div>
<div class="t" style="left:388px;top:849px;font-size:11px;color:#333">Кассир:</div>
<div class="t" style="left:467px;top:849px;font-size:11.3px;color:#1e4ac4">Кассир Тест</div>
</body></html>
